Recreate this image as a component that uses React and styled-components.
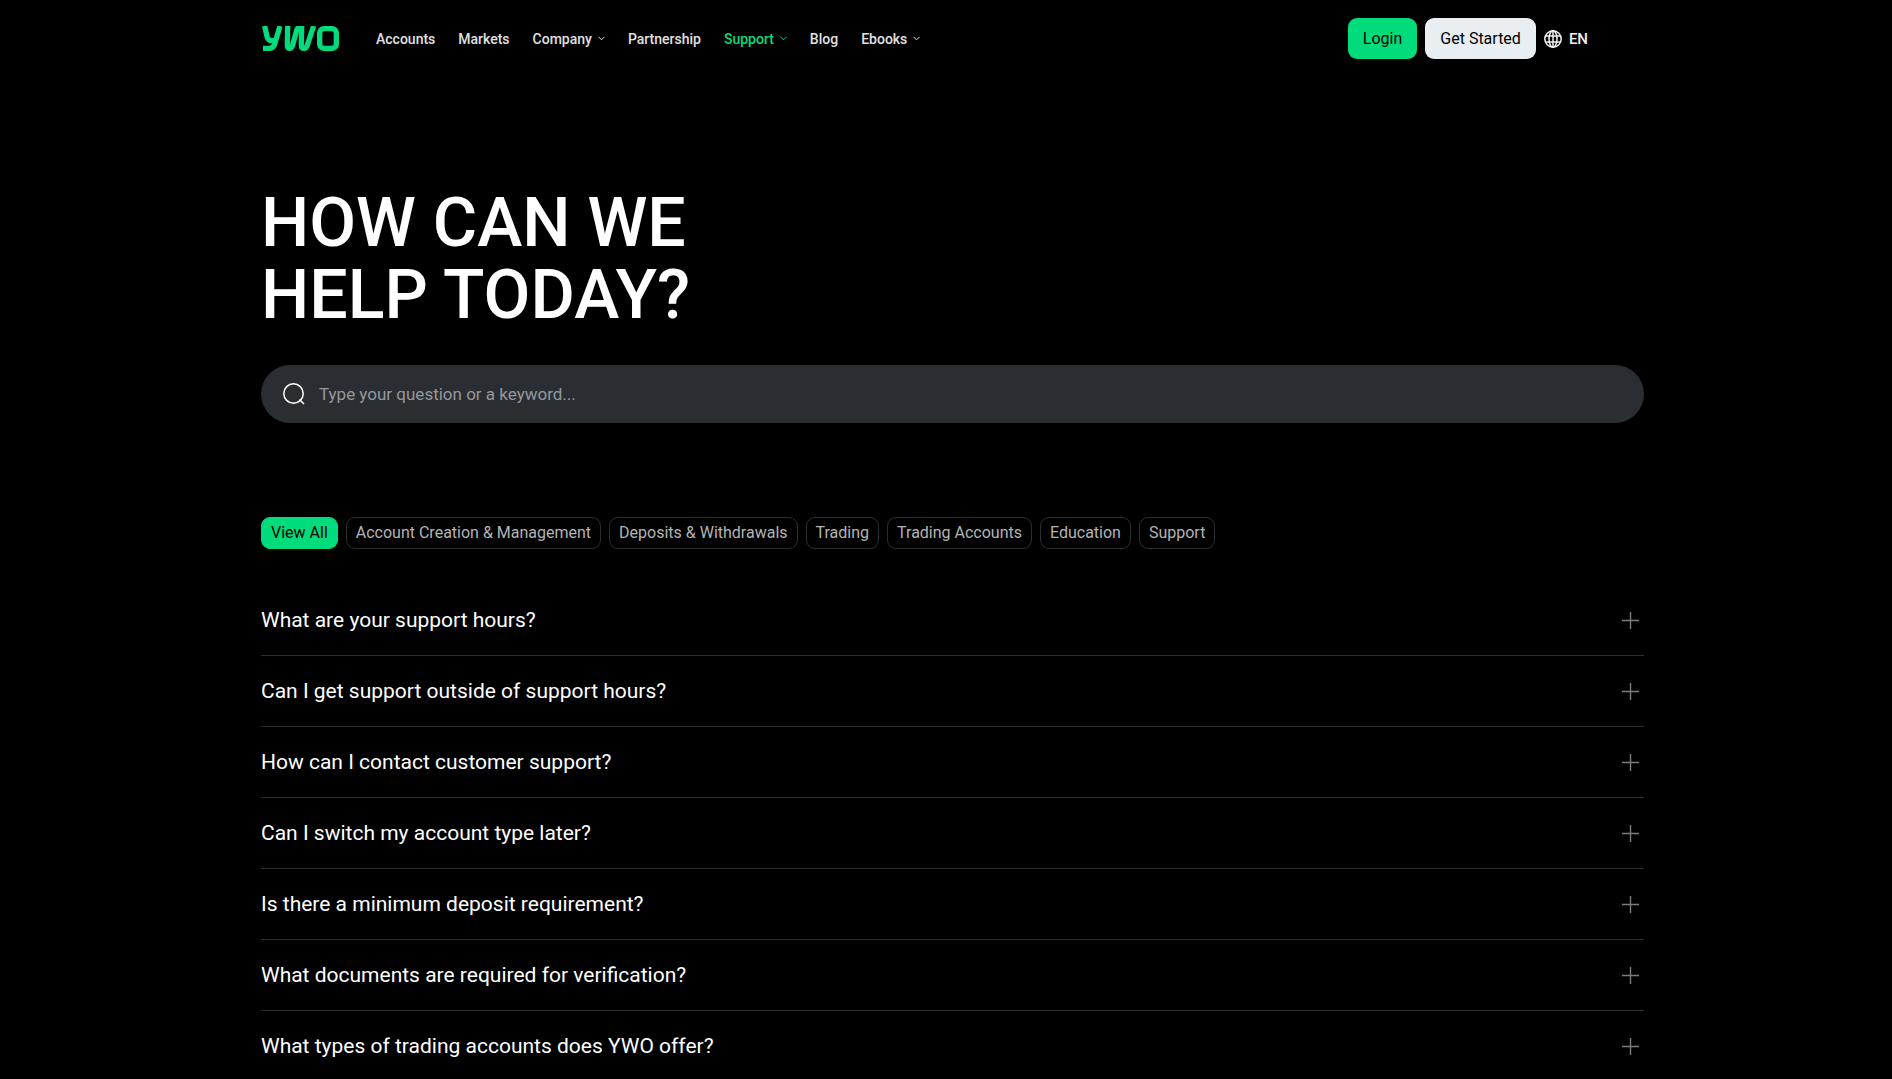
import { useState } from "react";
import styled, { createGlobalStyle } from "styled-components";

const navItems = [
  { label: "Accounts" },
  { label: "Markets" },
  { label: "Company", menu: true },
  { label: "Partnership" },
  { label: "Support", menu: true, active: true },
  { label: "Blog" },
  { label: "Ebooks", menu: true },
];

const categories = [
  "View All",
  "Account Creation & Management",
  "Deposits & Withdrawals",
  "Trading",
  "Trading Accounts",
  "Education",
  "Support",
];

const questions = [
  "What are your support hours?",
  "Can I get support outside of support hours?",
  "How can I contact customer support?",
  "Can I switch my account type later?",
  "Is there a minimum deposit requirement?",
  "What documents are required for verification?",
  "What types of trading accounts does YWO offer?",
];

export default function App() {
  const [category, setCategory] = useState("View All");

  return (
    <>
      <GlobalStyle />
      <Page>
        <Header>
          <LogoLink href="#" aria-label="YWO">
            <Logo />
          </LogoLink>
          <Nav>
            {navItems.map((item) => (
              <NavLink key={item.label} href="#" $active={item.active}>
                {item.label}
                {item.menu && <Chevron />}
              </NavLink>
            ))}
          </Nav>
          <Actions>
            <ActionButton type="button" $primary>
              Login
            </ActionButton>
            <ActionButton type="button">Get Started</ActionButton>
            <LanguageButton type="button">
              <Globe />
              EN
            </LanguageButton>
          </Actions>
        </Header>
        <main>
          <Title>
            HOW CAN WE
            <br />
            HELP TODAY?
          </Title>
          <SearchBar>
            <SearchIcon />
            <SearchInput
              type="text"
              aria-label="Search"
              placeholder="Type your question or a keyword..."
            />
          </SearchBar>
          <Categories>
            {categories.map((name) => (
              <CategoryButton
                key={name}
                type="button"
                $active={name === category}
                onClick={() => setCategory(name)}
              >
                {name}
              </CategoryButton>
            ))}
          </Categories>
          <QuestionList>
            {questions.map((question) => (
              <QuestionItem key={question}>
                <QuestionButton type="button">
                  {question}
                  <Plus />
                </QuestionButton>
              </QuestionItem>
            ))}
          </QuestionList>
        </main>
      </Page>
    </>
  );
}

function Logo() {
  return (
    <svg width="77" height="25" viewBox="0 0 231 75" fill="none">
      <g stroke="#00dc7c" strokeWidth="16">
        <path d="M8 0L15 32Q18 44 30 44H40" />
        <path d="M54 0L38 54Q34 67 22 67H3" />
        <path d="M77 0L76 57Q76 67 83 67Q89 67 92 57L106 6" />
        <path d="M119 0L118 57Q118 67 126 67Q133 67 136 57L155 0" />
        <path d="M101 8H122" />
        <rect x="173" y="8" width="50" height="59" rx="13" />
      </g>
    </svg>
  );
}

function Chevron() {
  return (
    <svg width="7" height="5" viewBox="0 0 7 5" fill="none">
      <path d="M0.5 0.8L3.5 3.8L6.5 0.8" stroke="currentColor" />
    </svg>
  );
}

function Globe() {
  return (
    <svg width="18" height="18" viewBox="0 0 18 18" fill="none">
      <g stroke="currentColor" strokeWidth="1.5">
        <circle cx="9" cy="9" r="8.2" />
        <ellipse cx="9" cy="9" rx="4" ry="8.2" />
        <path d="M9 1V17M1.4 6H16.6M1.4 12H16.6" />
      </g>
    </svg>
  );
}

function SearchIcon() {
  return (
    <svg width="22" height="22" viewBox="0 0 22 22" fill="none">
      <circle cx="10.5" cy="10.5" r="9.7" stroke="#fff" strokeWidth="1.5" />
      <path d="M16.5 16.5L21 21" stroke="#fff" strokeWidth="1.5" />
    </svg>
  );
}

function Plus() {
  return (
    <svg width="17" height="17" viewBox="0 0 17 17" fill="none">
      <path d="M8.5 0V17M0 8.5H17" stroke="#7c7c7c" strokeWidth="1.4" />
    </svg>
  );
}

const GlobalStyle = createGlobalStyle`
  * {
    box-sizing: border-box;
  }
  body {
    margin: 0;
    background-color: #000;
    color: #fff;
    font-family: Roboto, "Liberation Sans", sans-serif;
  }
  button, input {
    font-family: inherit;
  }
`;

const Page = styled.div`
  max-width: 1396px;
  margin: 0 auto;
  padding-left: 13px;
`;

const Header = styled.header`
  display: flex;
  align-items: center;
  height: 77px;
  padding-right: 56px;
`;

const LogoLink = styled.a`
  display: flex;
  margin: 0 37px 0 1px;
`;

const Nav = styled.nav`
  display: flex;
  gap: 23px;
`;

const NavLink = styled.a`
  display: flex;
  align-items: center;
  gap: 6px;
  color: ${({ $active }) => ($active ? "#00dc7c" : "#e0e0e0")};
  font-size: 14px;
  font-weight: 500;
  line-height: 20px;
  text-decoration: none;
`;

const Actions = styled.div`
  display: flex;
  align-items: center;
  gap: 8px;
  margin-left: auto;
`;

const ActionButton = styled.button`
  height: 41px;
  padding: 0 15px;
  border: none;
  border-radius: 9px;
  background-color: ${({ $primary }) => ($primary ? "#00dc7c" : "#e9eef2")};
  color: #000;
  font-size: 16px;
  cursor: pointer;
`;

const LanguageButton = styled.button`
  display: flex;
  align-items: center;
  gap: 7px;
  padding: 0;
  border: none;
  background: none;
  color: #f0f0f0;
  font-size: 15px;
  font-weight: 500;
  cursor: pointer;
`;

const Title = styled.h1`
  margin: 110px 0 0;
  font-size: 68px;
  font-weight: 500;
  line-height: 72px;
`;

const SearchBar = styled.div`
  display: flex;
  align-items: center;
  gap: 14px;
  height: 58px;
  margin-top: 34px;
  padding: 0 22px;
  border-radius: 29px;
  background-color: #2a2e32;
`;

const SearchInput = styled.input`
  flex: 1;
  padding: 0;
  border: none;
  outline: none;
  background: none;
  color: #fff;
  font-size: 17px;
  &::placeholder {
    color: #95989b;
    opacity: 1;
  }
`;

const Categories = styled.div`
  display: flex;
  flex-wrap: wrap;
  gap: 8px;
  margin-top: 94px;
`;

const CategoryButton = styled.button`
  height: 32px;
  padding: 0 9px 2px;
  border: 1px solid ${({ $active }) => ($active ? "#00dc7c" : "#2a2e32")};
  border-radius: 9px;
  background-color: ${({ $active }) => ($active ? "#00dc7c" : "transparent")};
  color: ${({ $active }) => ($active ? "#000" : "#b4b4b4")};
  font-size: 16px;
  cursor: pointer;
`;

const QuestionList = styled.ul`
  margin: 36px 0 0;
  padding: 0;
  list-style: none;
`;

const QuestionItem = styled.li`
  border-bottom: 1px solid #2a2e32;
`;

const QuestionButton = styled.button`
  display: flex;
  align-items: center;
  justify-content: space-between;
  width: 100%;
  height: 70px;
  padding: 0 5px 0 0;
  border: none;
  background: none;
  color: #fff;
  font-size: 21px;
  text-align: left;
  cursor: pointer;
`;
